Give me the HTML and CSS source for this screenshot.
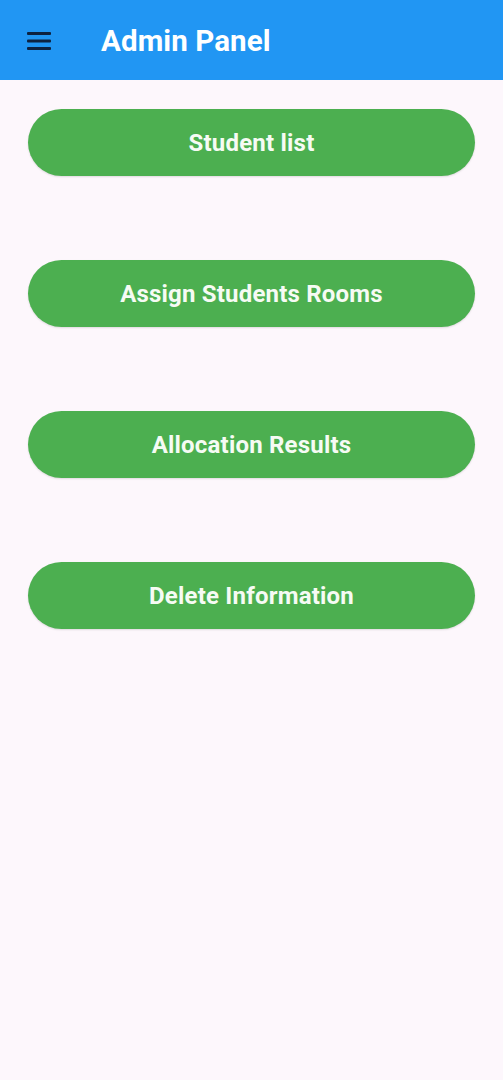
FILE: index.html
```html
<!DOCTYPE html>
<html>
<head>
<meta charset="utf-8">
<link rel="stylesheet" href="styles.css">
</head>
<body>
<header class="appbar">
  <button class="menu" aria-label="menu">
    <svg width="24" height="18" viewBox="0 0 24 18"><rect x="0" y="0" width="24" height="3" rx="1" fill="#0d2240"/><rect x="0" y="7.5" width="24" height="3" rx="1" fill="#0d2240"/><rect x="0" y="15" width="24" height="3" rx="1" fill="#0d2240"/></svg>
  </button>
  <h1 class="title">Admin Panel</h1>
</header>
<main class="content">
  <button class="action">Student list</button>
  <button class="action">Assign Students Rooms</button>
  <button class="action">Allocation Results</button>
  <button class="action">Delete Information</button>
</main>
</body>
</html>
```
FILE: styles.css
```css
html, body {
  margin: 0;
  padding: 0;
}
body {
  background: #fdf7fc;
  font-family: Roboto, "Noto Sans", sans-serif;
  width: 503px;
  height: 1080px;
}
.appbar {
  height: 80px;
  background: #2196f3;
  display: flex;
  align-items: center;
  padding-left: 27px;
  box-sizing: border-box;
}
.menu {
  background: none;
  border: 0;
  padding: 0;
  width: 24px;
  height: 18px;
  display: flex;
  margin-top: 2px;
}
.title {
  margin: 2px 0 0 50px;
  color: #ffffff;
  font-size: 29.5px;
  font-weight: 700;
  letter-spacing: 0.1px;
}
.content {
  display: flex;
  flex-direction: column;
  gap: 84px;
  padding: 29px 28px 0 28px;
}
.action {
  height: 67px;
  border: 0;
  border-radius: 34px;
  background: #4caf50;
  color: #f6fbf4;
  font-family: Roboto, "Noto Sans", sans-serif;
  font-size: 24px;
  font-weight: 700;
  letter-spacing: 0.2px;
  box-shadow: 0 1px 2px rgba(0,0,0,0.12);
  padding: 0;
}
```
